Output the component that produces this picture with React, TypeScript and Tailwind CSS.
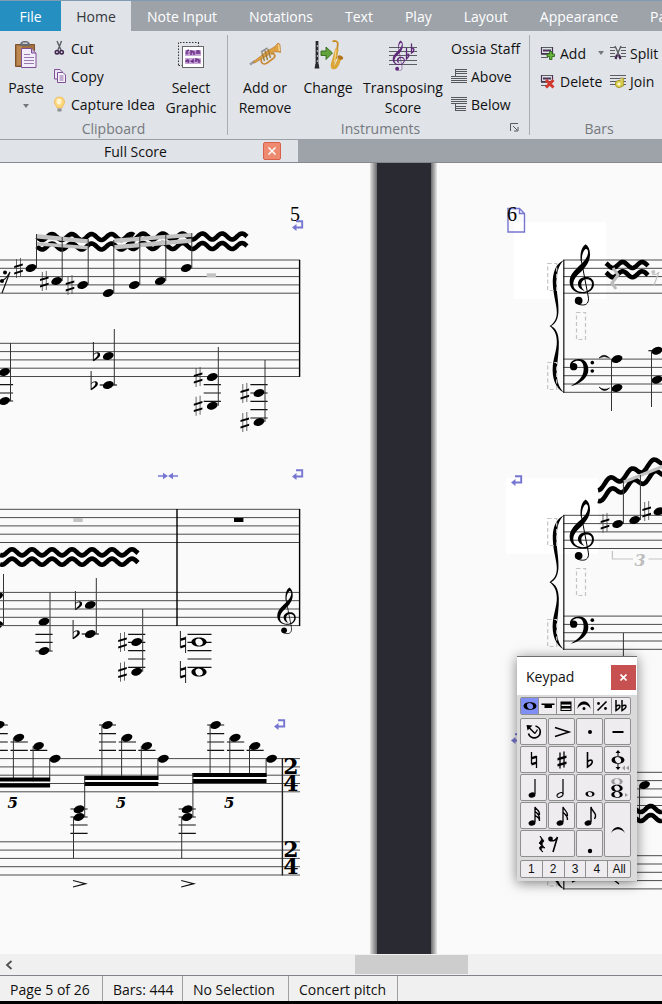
import React from 'react';

type Point = [number, number];

const TABS = ['Note Input', 'Notations', 'Text', 'Play', 'Layout', 'Appearance', 'Parts'];

/* ---------- notation glyphs ---------- */

const Head: React.FC<{ x: number; y: number }> = ({ x, y }) => (
  <ellipse rx="5.6" ry="3.7" transform={`translate(${x} ${y}) rotate(-20)`} />
);

const Sharp: React.FC<{ x: number; y: number }> = ({ x, y }) => (
  <g transform={`translate(${x} ${y})`}>
    <path d="M-2 -9V10M2 -10V9" stroke="#444" strokeWidth="0.8" />
    <path d="M-4.3 -2L4.3 -4.6V-2.6L-4.3 0ZM-4.3 4.4L4.3 1.8V3.8L-4.3 6.4Z" />
  </g>
);

const Flat: React.FC<{ x: number; y: number }> = ({ x, y }) => (
  <g transform={`translate(${x} ${y})`}>
    <path d="M-2.7 -14V5" stroke="#222" strokeWidth="1" />
    <path d="M-2.7 -1.5C0 -5 4.6 -4.2 4 -0.8C3.5 1.8 0 3.6 -2.7 5.2V3.6C-0.5 2 1.4 0.6 1.6 -1.2C1.7 -3.4 -1 -3 -2.7 -0.6Z" />
  </g>
);

const Natural: React.FC<{ x: number; y: number }> = ({ x, y }) => (
  <g transform={`translate(${x} ${y})`}>
    <path d="M-2.6 -11V5.4M2.6 -5.4V11" stroke="#222" strokeWidth="1" />
    <path d="M-2.6 -3.4L2.6 -5V-2.6L-2.6 -1ZM-2.6 4L2.6 2.4V4.8L-2.6 6.4Z" />
  </g>
);

const Whole: React.FC<{ x: number; y: number }> = ({ x, y }) => (
  <g transform={`translate(${x} ${y})`}>
    <path
      fillRule="evenodd"
      d="M-7.6 0C-7.6 -2.7 -4.3 -4.5 0 -4.5S7.6 -2.7 7.6 0S4.3 4.5 0 4.5S-7.6 2.7 -7.6 0ZM-2.6 -2.8C-4.6 -1.6 -3.4 2.6 -0.6 3.6C2.4 4 4.4 2.4 3.6 -0.4C2.6 -3.2 -0.6 -4.4 -2.6 -2.8Z"
    />
  </g>
);

const TrebleClef: React.FC<{ x: number; y: number; size?: number; color?: string }> = ({ x, y, size = 1, color = '#000' }) => (
  <g transform={`translate(${x} ${y}) scale(${size / 3})`} fill={color}>
    <path d="M49 0C59 6 63 20 62 34C60 56 48 70 32 85C18 98 12 108 12 120C12 134 24 143 40 143C58 143 68 132 68 119C68 110 61 105 52 105C41 105 36 113 36 121C36 129 40 135 46 139C34 137 26 128 26 118C26 106 37 98 51 98C65 98 74 106 74 119C74 135 60 147 39 147C18 147 1 133 1 112C1 95 10 84 24 70C38 57 54 44 56 26C57 16 52 12 48 15C40 22 37 36 38 48L34 50C32 28 36 8 49 0Z" />
    <path d="M36 48L57 158C60 174 52 183 39 182C30 182 20 178 19 169" fill="none" stroke={color} strokeWidth="3" />
    <circle cx="28" cy="169" r="11.5" />
  </g>
);

const BassClef: React.FC<{ x: number; y: number }> = ({ x, y }) => (
  <g transform={`translate(${x} ${y}) scale(0.333)`}>
    <circle cx="11" cy="23" r="11" />
    <path d="M0 22C-1 9 11 0 27 0C45 0 55 14 55 32C55 56 32 74 2 82C24 69 41 54 41 31C41 15 36 5 24 5C12 5 5 12 4 22Z" />
    <circle cx="67" cy="11" r="5.5" />
    <circle cx="67" cy="36" r="5.5" />
  </g>
);

// Spans from the top of the first staff to the foot of the second
const Brace: React.FC<{ x: number; top: number; bottom: number }> = ({ x, top, bottom }) => (
  <path
    transform={`translate(${x} ${top}) scale(0.333 ${(bottom - top) / 397})`}
    d="M44 0C20 9 8 37 10 73C12 110 22 135 22 157C22 179 12 190 0 198C12 206 22 220 22 245C22 267 14 287 10 315C6 355 20 387 44 397C28 383 20 360 22 325C24 300 29 270 28 245C27 217 18 205 5 198C18 191 27 177 27 150C27 120 22 105 21 70C21 37 28 13 44 0Z"
  />
);

const Staff: React.FC<{ x1: number; x2: number; y: number }> = ({ x1, x2, y }) => (
  <path
    d={[0, 1, 2, 3, 4].map((i) => `M${x1} ${y + i * 8.3}H${x2}`).join('')}
    stroke="#4a4a4a"
    strokeWidth="1"
  />
);

interface WaveProps {
  x1: number;
  x2: number;
  peak: number;
  y: number;
  period?: number;
  slope?: number;
  amp?: number;
}

const Wave: React.FC<WaveProps> = ({ x1, x2, peak, y, period = 19.8, slope = 0, amp = 3 }) => {
  const points: string[] = [];
  for (let x = x1; x <= x2; x += 1) {
    const offset = -amp * Math.cos(((x - peak) / period) * 2 * Math.PI);
    points.push(`${x},${(y + offset + (x - x1) * slope).toFixed(2)}`);
  }
  return <polyline points={points.join(' ')} fill="none" stroke="#000" strokeWidth="4.6" />;
};

const Ledgers: React.FC<{ x: number; ys: number[] }> = ({ x, ys }) => (
  <path d={ys.map((y) => `M${x - 8.6} ${y}H${x + 8.6}`).join('')} stroke="#111" strokeWidth="1.2" />
);

const Stem: React.FC<{ x: number; y1: number; y2: number }> = ({ x, y1, y2 }) => (
  <path d={`M${x} ${y1}V${y2}`} stroke="#333" strokeWidth="1" />
);

const BreakMark: React.FC<{ x: number; y: number }> = ({ x, y }) => (
  <g transform={`translate(${x} ${y})`}>
    <path d="M4 1.2H10.2V7.5H3" fill="none" stroke="#7676d2" strokeWidth="1.9" />
    <path d="M0 7.5L4.5 4V11Z" fill="#7676d2" />
  </g>
);

const DashedBox: React.FC<{ x: number; y: number }> = ({ x, y }) => (
  <rect x={x} y={y} width="9" height="27" fill="none" stroke="#c4c4c4" strokeWidth="1.2" strokeDasharray="4 2.5" />
);

/* ---------- pages ---------- */

const BEAMED: Point[] = [
  [31, 268], [56.7, 281], [82.7, 285], [108.3, 293], [134.3, 285], [160.3, 281], [186.3, 268],
];
const BEAM_TOPS = [234, 237, 239, 240, 237, 235, 233];

interface Chord {
  x: number;
  notes: number[];
  top: number;
  ledgers: number[];
  sharps?: boolean;
  flats?: boolean;
}

const CHORDS: Chord[] = [
  { x: 4.5, notes: [372, 401], top: 343, ledgers: [384.7, 393, 401] },
  { x: 108.3, notes: [356, 385], top: 329, ledgers: [385], flats: true },
  { x: 212.3, notes: [377, 405.7], top: 347, ledgers: [384.7, 393, 401.3], sharps: true },
  { x: 259, notes: [393, 422], top: 360, ledgers: [384.7, 393, 401.3, 409.7, 418], sharps: true },
  { x: -2.5, notes: [596, 625], top: 574, ledgers: [] },
  { x: 44, notes: [621.7, 651], top: 592, ledgers: [634.3, 642.3, 651] },
  { x: 90.3, notes: [605, 634], top: 578, ledgers: [634], flats: true },
  { x: 136.7, notes: [642, 671.7], top: 609, ledgers: [634.3, 642.3, 650.7, 659, 667.3], sharps: true },
];

const RUNS = [
  { dx: -108.2, beam: 777.4 },
  { dx: 0, beam: 776 },
  { dx: 108.2, beam: 773 },
];

const RUN_NOTES: Point[] = [
  [107.3, 725], [127, 737.7], [146.7, 746], [163.3, 758.7],
];

const LeftPage: React.FC = () => (
  <svg viewBox="0 163 370 791" preserveAspectRatio="xMaxYMin meet" className="block h-[791px] w-full" role="img" aria-label="Page 5">
    <text x="290" y="221" fontSize="20" fontFamily="Liberation Serif, serif">5</text>
    <BreakMark x={292} y={220} />

    <Wave x1={37} x2={134} peak={52} y={237} />
    <Wave x1={37} x2={134} peak={52} y={246.5} />
    <Wave x1={126} x2={247} peak={143} y={236.5} />
    <Wave x1={126} x2={247} peak={143} y={246} />
    <g fill="#c3c3c3">
      <path d="M36.5 234L88.3 239.3V243.6L36.5 238.5ZM36.5 242L88.3 246V249.5L36.5 245.5Z" />
      <path d="M114.3 238.5L191.7 233V237L114.3 242.8ZM114.3 245L191.7 238.5V242.8L114.3 249.5Z" />
    </g>

    <Staff x1={0} x2={300} y={260} />
    <Staff x1={0} x2={300} y={343.3} />
    <path d="M299.6 260V376.8" stroke="#000" strokeWidth="1.4" />
    <path d="M-2 281Q4 283 10 272L2 293" fill="none" stroke="#111" strokeWidth="1.2" />
    <circle cx="5" cy="272.5" r="2" />
    <circle cx="2" cy="281" r="2" />
    {BEAMED.map(([x, y], i) => (
      <g key={x}>
        <Head x={x} y={y} />
        <Stem x={x + 5.5} y1={BEAM_TOPS[i]} y2={y} />
      </g>
    ))}
    <Sharp x={18.5} y={268} />
    <Sharp x={44.3} y={281} />
    <Sharp x={70} y={285} />
    <rect x="206.7" y="273.3" width="9.3" height="4" fill="#c3c3c3" />

    {CHORDS.map(({ x, notes, top, ledgers, sharps, flats }) => (
      <g key={`${x}-${top}`}>
        <Ledgers x={x} ys={ledgers} />
        {notes.map((y) => (
          <g key={y}>
            <Head x={x} y={y} />
            {sharps && <Sharp x={x - 14.2} y={y} />}
          </g>
        ))}
        {flats && <Flat x={x - 12.2} y={notes[0]} />}
        {flats && <Flat x={x - 14.5} y={notes[1]} />}
        <Stem x={x + 6} y1={top} y2={notes[1]} />
      </g>
    ))}

    <path d="M158 476H166M170 476H178" stroke="#7676d2" strokeWidth="1.4" />
    <path d="M163 472.7L168 476L163 479.3ZM173 472.7L168 476L173 479.3Z" fill="#7676d2" />
    <BreakMark x={292} y={469} />
    <Staff x1={0} x2={300} y={509.3} />
    <Staff x1={0} x2={300} y={592.4} />
    <path d="M177 509V626M299.6 509V626" stroke="#000" strokeWidth="1.4" />
    <rect x="73.3" y="518" width="9.4" height="4" fill="#c3c3c3" />
    <rect x="234" y="518" width="9.4" height="4" />
    <Wave x1={0} x2={138} peak={12} period={20} y={552.3} />
    <Wave x1={0} x2={138} peak={12} period={20} y={561.7} />
    <TrebleClef x={277} y={587.5} size={0.76} />
    <path
      d="M187.5 634.3H211.500M187.5 642.3H211.500M187.5 650.7H211.500M187.5 659H211.500M187.5 667.3H211.500"
      stroke="#111"
      strokeWidth="1.2"
    />
    <ellipse cx="199" cy="642" rx="5" ry="3.5" fill="#fafafa" />
    <ellipse cx="199" cy="672" rx="5" ry="3.5" fill="#fafafa" />
    <Whole x={199} y={642} />
    <Whole x={199} y={672} />
    <Natural x={183} y={642} />
    <Natural x={183} y={672} />

    <BreakMark x={274} y={719} />
    <Staff x1={0} x2={300} y={758.6} />
    <Staff x1={0} x2={300} y={841.8} />
    <path d="M282.4 758V875.4" stroke="#222" strokeWidth="1.4" />
    {RUNS.map(({ dx, beam }) => (
      <g key={dx} transform={`translate(${dx} 0)`}>
        <path
          d="M99 725H116M99 733.7H116M99 742H116M99 750.3H116M118.7 742H136M118.7 750.3H136M138.3 750.3H155.5"
          stroke="#111"
          strokeWidth="1.2"
        />
        {RUN_NOTES.map(([x, y]) => (
          <g key={x}>
            <Head x={x} y={y} />
            <Stem x={x - 5.4} y1={y} y2={beam + 4} />
          </g>
        ))}
        <path d={`M84.3 ${beam}H158.3V${beam + 4}H84.3ZM84.3 ${beam + 6}H158.3V${beam + 10}H84.3Z`} />
        <Ledgers x={79} ys={[809, 817, 825, 833.3]} />
        <Head x={79} y={809.3} />
        <Head x={79} y={817} />
        <Stem x={84.7} y1={beam} y2={817} />
        <Stem x={73.5} y1={817} y2={858.3} />
        <path d="M73 880.5L85.5 883.7L73 887" fill="none" stroke="#111" strokeWidth="1.2" />
        <text x="121" y="808" textAnchor="middle" fontSize="15" fontWeight="bold" fontStyle="italic" fontFamily="DejaVu Serif, serif">5</text>
      </g>
    ))}
    <g fontSize="22" fontWeight="bold" fontFamily="DejaVu Serif, serif" textAnchor="middle">
      <text x="291" y="774">2</text>
      <text x="291" y="791">4</text>
      <text x="291" y="857">2</text>
      <text x="291" y="874">4</text>
    </g>
  </svg>
);

const RightPage: React.FC = () => (
  <svg viewBox="437 163 225 791" preserveAspectRatio="xMaxYMin meet" className="block h-[791px] w-full" role="img" aria-label="Page 6">
    <rect x="514" y="222" width="92" height="77" fill="#fff" />
    <rect x="506" y="478" width="92" height="76" fill="#fff" />
    <path d="M508 208.5H519.5L524.5 213.5V232H508ZM519.5 208.5V213.5H524.5" fill="none" stroke="#7676d2" strokeWidth="1.4" />
    <text x="507" y="221" fontSize="20" fontFamily="Liberation Serif, serif">6</text>

    <Staff x1={563} x2={662} y={260} />
    <Staff x1={563} x2={662} y={359.1} />
    <path d="M563.8 260V392.8" stroke="#222" strokeWidth="1.3" />
    <Brace x={549.5} top={260} bottom={392.5} />
    <TrebleClef x={569.3} y={244.3} />
    <BassClef x={570} y={359} />
    <Wave x1={606} x2={648} peak={622.7} period={19.5} y={265} />
    <Wave x1={606} x2={648} peak={622.7} period={19.5} y={274.3} />
    <path d="M613 268L618 275L612 283L616 289" fill="none" stroke="#bbb" strokeWidth="3" />
    <path d="M652 274Q656 276 659 272L654 285" fill="none" stroke="#c3c3c3" strokeWidth="1.2" />
    <circle cx="653.3" cy="272" r="2" fill="#c3c3c3" />
    <DashedBox x={547.7} y={263.5} />
    <DashedBox x={576.5} y={312.5} />
    <DashedBox x={547.7} y={362.5} />
    <path d="M599 358Q604 352.5 609.5 358Q604 355 599 358ZM599 387Q604 393.5 609.5 388Q604 391 599 387Z" stroke="#000" strokeWidth="0.6" />
    <Head x={617} y={359} />
    <Head x={617} y={388} />
    <Stem x={611.5} y1={359} y2={411} />
    <Ledgers x={657} ys={[350.7]} />
    <Head x={657} y={350.7} />
    <Head x={657} y={379.7} />
    <Stem x={651.5} y1={351} y2={407} />

    <BreakMark x={511} y={475} />
    <Staff x1={563} x2={662} y={515.3} />
    <Staff x1={563} x2={662} y={616.1} />
    <path d="M563.8 515V650" stroke="#222" strokeWidth="1.3" />
    <Brace x={549.5} top={515.3} bottom={649.5} />
    <TrebleClef x={569.3} y={499.5} />
    <BassClef x={570} y={616.5} />
    <DashedBox x={547.7} y={518.5} />
    <DashedBox x={576.5} y={568.5} />
    <DashedBox x={547.7} y={619.5} />
    <Wave x1={598} x2={663} peak={610} period={21.6} y={486.5} slope={-0.41} amp={4} />
    <Wave x1={598} x2={663} peak={611.5} period={21.6} y={498} slope={-0.4} amp={4} />
    <path d="M623.3 480.5L662 465V468.5L623.3 484Z" fill="#c3c3c3" />
    <Head x={617.7} y={524} />
    <Head x={634.7} y={520} />
    <Head x={659} y={511.3} />
    <Stem x={623.4} y1={481} y2={524} />
    <Stem x={640.4} y1={475} y2={520} />
    <Sharp x={605} y={523} />
    <Sharp x={646.7} y={511} />
    <path d="M612.4 551V559H633M648.5 559H662" fill="none" stroke="#c3c3c3" strokeWidth="1.2" />
    <text x="640" y="566" textAnchor="middle" fontSize="16" fontWeight="bold" fontStyle="italic" fontFamily="DejaVu Serif, serif" fill="#bdbdbd">3</text>
    <Stem x={623.4} y1={633} y2={660} />

    <BreakMark x={511} y={733} />
    <Staff x1={563} x2={662} y={772.3} />
    <Staff x1={563} x2={662} y={855.7} />
    <path d="M563.8 772V889.4" stroke="#222" strokeWidth="1.3" />
    <Brace x={549.5} top={772.3} bottom={889} />
    <DashedBox x={547.7} y={859} />
    <Head x={644.5} y={785} />
    <Stem x={639.5} y1={785} y2={819} />
    <Wave x1={636} x2={662} peak={650.7} period={20} y={809} />
    <Wave x1={636} x2={662} peak={650.7} period={20} y={818} />
    <path d="M572 882L576 880M614 880L619 884" stroke="#000" strokeWidth="1.4" />
  </svg>
);

/* ---------- ribbon icons ---------- */

const PasteIcon = () => (
  <svg width="26" height="30" viewBox="0 0 26 30" aria-hidden="true">
    <path d="M2.5 4.5H21.5V26.5H2.5Z" fill="#a4703f" stroke="#7b5230" />
    <path d="M4 6H9V25H4Z" fill="#bb8850" />
    <path d="M7 6C7 2 9 1 12 1S17 2 17 6Z" fill="#666a70" />
    <rect x="9.5" y="2.5" width="5" height="1.5" fill="#c9ccd0" />
    <path d="M8.5 8.5H18.5L23 13V27.5H8.5Z" fill="#f2edfa" stroke="#7c4f96" />
    <path d="M18.5 8.5V13H23" fill="#c6b0d6" stroke="#7c4f96" />
    <path d="M11 14.5H17M11 17.5H21M11 20.5H21M11 23.5H21" stroke="#9a78b0" />
  </svg>
);

const CutIcon = () => (
  <svg width="14" height="16" viewBox="0 0 14 16" aria-hidden="true">
    <path d="M4 1L8 10M8.5 1L5 10" stroke="#5a5d63" strokeWidth="1.4" />
    <circle cx="4" cy="12.2" r="1.7" fill="none" stroke="#43264f" strokeWidth="1.6" />
    <circle cx="8.6" cy="12.2" r="1.7" fill="none" stroke="#43264f" strokeWidth="1.6" />
  </svg>
);

const CopyIcon = () => (
  <svg width="14" height="16" viewBox="0 0 14 16" aria-hidden="true">
    <path d="M1.5 1.5H7L9.5 4V11H1.5Z" fill="#ece6f3" stroke="#7c4f96" />
    <path d="M4.5 4.5H10L12.5 7V14.5H4.5Z" fill="#f6f2fa" stroke="#7c4f96" />
    <path d="M6.5 8H10.5M6.5 10H10.5M6.5 12H10.5" stroke="#8d68a4" />
  </svg>
);

const BulbIcon = () => (
  <svg width="14" height="17" viewBox="0 0 14 17" aria-hidden="true">
    <path d="M6.500 1C3 1 1.500 3.500 1.500 6C1.500 8.500 3.500 9.500 4 12H9C9.500 9.500 11.500 8.500 11.500 6C11.500 3.500 10 1 6.500 1Z" fill="#fcd67a" stroke="#efb85a" strokeWidth="0.8" />
    <ellipse cx="6" cy="5.5" rx="2.5" ry="3" fill="#fff4cf" />
    <path d="M4.5 12.5H8.5V15.5H4.500Z" fill="#8b8f94" />
  </svg>
);

const SelectIcon = () => (
  <svg width="28" height="30" viewBox="0 0 28 30" aria-hidden="true">
    <path d="M1.5 25V2.5H22" fill="none" stroke="#333" strokeDasharray="1.5 1.5" />
    <path d="M21.5 2.5V6M1.5 25.5H5" stroke="#333" strokeDasharray="1.5 1.5" />
    <rect x="5.5" y="6.5" width="21" height="21" fill="#fff" stroke="#666" />
    <path d="M8 10H24V16H8ZM8 18H24V24H8Z" fill="#c7a6d8" />
    <path d="M8 13H24M8 21H24" stroke="#9a62b4" />
    <path d="M10 14.5V11L12 10M14 15V11L17 12V15M20 14V11H22V14M9 22C11 18 12 20 11 23M14 22L16 20V23M19 22V19L22 20V23" fill="none" stroke="#6c2f86" strokeWidth="1.4" />
  </svg>
);

const TrumpetIcon = () => (
  <svg width="34" height="30" viewBox="0 0 34 30" aria-hidden="true">
    <path d="M2 24.5L7 21" stroke="#9a9da2" strokeWidth="2.4" />
    <path d="M5 22L20 10.5C25 8 28 6 30 3L32 4.500L32.500 12.500C28 11 25 12 21 14.500L6.500 23Z" fill="#e0a143" stroke="#a86c23" strokeWidth="0.6" />
    <path d="M13 19C13 24 16 25 19 23L26 18C28 15 26 13 23 14" fill="none" stroke="#c98a35" strokeWidth="1.7" />
    <path d="M14 12.500L16.500 21M17 10.500L19.500 20M20 9L22.500 18" stroke="#a3803f" strokeWidth="1.5" />
    <path d="M13 12L19.500 8" stroke="#8d9095" strokeWidth="1.5" />
    <path d="M30.500 4.500L31.500 11" stroke="#f6d693" strokeWidth="1.4" />
  </svg>
);

const ChangeIcon = () => (
  <svg width="32" height="32" viewBox="0 0 32 32" aria-hidden="true">
    <path d="M5 2V27" stroke="#26282c" strokeWidth="2.8" />
    <path d="M2.5 29.500L3.500 25H6.500L7.500 29.500Z" fill="#26282c" />
    <path d="M5.500 6V8M5.500 11V13M5.500 16V18M5.500 21V23" stroke="#a4a7ac" strokeWidth="1.4" />
    <path d="M9 12H14V8L20.5 14L14 20.5V16.5H9Z" fill="#62a33c" stroke="#33661c" strokeWidth="0.9" />
    <path d="M20.500 2.500C23 1.500 26 2 25.800 5L24 20" fill="none" stroke="#c88c28" strokeWidth="1.8" />
    <path d="M25 10L22 21C20 26 20 28.500 22 28.500C25 28.500 25.500 24 28 19" fill="none" stroke="#dba637" strokeWidth="3.6" />
    <ellipse cx="28.300" cy="18.500" rx="3" ry="2" fill="#b2761e" transform="rotate(25 28.300 18.500)" />
    <path d="M24 11L22.500 23" stroke="#f7dc93" strokeWidth="1" />
  </svg>
);

const TransposeIcon = () => (
  <svg width="30" height="32" viewBox="0 0 30 32" aria-hidden="true">
    <path d="M1 8.5H29M1 12.5H29M1 16.5H29M1 21.5H29M1 25.5H29" stroke="#5b5d62" />
    <TrebleClef x={4.5} y={1.5} size={0.5} color="#5f2779" />
    <g fill="none" stroke="#5f2779" strokeWidth="1.3">
      <path d="M18.5 9V20C22 17 21.5 14 18.5 15.500M23.5 4.500V14C27 11.500 26.500 8.500 23.5 10" />
    </g>
  </svg>
);

const OssiaIcon: React.FC<{ above?: boolean }> = ({ above }) => (
  <svg width="16" height="16" viewBox="0 0 16 16" aria-hidden="true">
    {above ? (
      <path d="M5 1.5H16M5 3.5H16M5 5.5H16M0 8.5H16M0 10.5H16M0 12.5H16M0 14.5H16M4.5 1V8" stroke="#55585d" />
    ) : (
      <path d="M0 1.5H16M0 3.5H16M0 5.5H16M0 7.5H16M5 10.5H15M5 12.5H15M5 14.5H15M4.5 8V15" stroke="#55585d" />
    )}
  </svg>
);

const BarIcon: React.FC<{ kind: 'add' | 'delete' | 'split' | 'join' }> = ({ kind }) => (
  <svg width="16" height="16" viewBox="0 0 16 16" aria-hidden="true">
    {kind === 'split' || kind === 'join' ? (
      <path d="M0 2.5H16M0 5.5H16M0 8.5H16M0 11.5H16" stroke="#5b5d62" strokeWidth="1.2" />
    ) : (
      <>
        <path d="M1 2.5H13M1 9.5H13M1 12.5H8" stroke="#5b5d62" />
        <path d="M1.5 2V8.500H12.5V2" fill="none" stroke="#4a3357" strokeWidth="1.2" />
        <path d="M3 5.500H11" stroke="#4a3357" strokeWidth="2" />
      </>
    )}
    {kind === 'add' && <path d="M7 9H9.5V6.500H12V9H14.500V11.500H12V14.500H9.5V11.500H7Z" fill="#69b53c" stroke="#2f6b1b" strokeWidth="0.9" />}
    {kind === 'delete' && <path d="M6 7L13.500 14.5M13.500 7L6 14.5" stroke="#d3382d" strokeWidth="3" />}
    {kind === 'split' && (
      <>
        <path d="M5 0H11V16H5Z" fill="#e0e3e8" />
        <path d="M5 1L9.5 11M11 1L6.5 11" stroke="#5a5d63" strokeWidth="1.4" />
        <path d="M5.500 14L7 10M10.500 14L9 10" stroke="#43264f" strokeWidth="2.2" />
      </>
    )}
    {kind === 'join' && (
      <>
        <circle cx="9" cy="11" r="3.6" fill="#e3d65a" stroke="#a2962b" />
        <circle cx="9" cy="11" r="1.300" fill="#fffbe0" />
        <path d="M10.500 5H13.500V13H11" fill="#d8cb52" stroke="#a2962b" strokeWidth="0.8" />
      </>
    )}
  </svg>
);

const DropArrow = () => (
  <svg width="6" height="4" viewBox="0 0 6 4" aria-hidden="true">
    <path d="M0 0H6L3 4Z" fill="#75787d" />
  </svg>
);

/* ---------- ribbon ---------- */

const Group: React.FC<{ label: string; className?: string; children: React.ReactNode }> = ({ label, className = '', children }) => (
  <section aria-label={label} className={`flex shrink-0 flex-col ${className}`}>
    <div className="flex h-[88px]">{children}</div>
    <div className="text-center leading-5 text-[#75787d]">{label}</div>
  </section>
);

const BigButton: React.FC<{ icon: React.ReactNode; className: string; children: React.ReactNode }> = ({ icon, className, children }) => (
  <button className={`flex flex-col items-center pt-2 leading-5 ${className}`}>
    <span className="flex h-8 items-center justify-center">{icon}</span>
    <span className="pt-[7px]">{children}</span>
  </button>
);

const SmallButton: React.FC<{ icon: React.ReactNode; children: React.ReactNode }> = ({ icon, children }) => (
  <button className="flex h-7 items-center gap-1 whitespace-nowrap">
    {icon}
    {children}
  </button>
);

const Ribbon: React.FC = () => (
  <header className="overflow-hidden whitespace-nowrap">
    <nav className="flex h-[31px] border-t border-[#7f9db1] bg-[#9ea3aa] text-white">
      <button className="w-[61px] shrink-0 bg-[#258fc2] pt-px">File</button>
      <button className="w-[70px] shrink-0 bg-[#e0e3e8] text-[#33363b]">Home</button>
      <div className="flex gap-8 pl-4">
        {TABS.map((tab) => (
          <button key={tab} className="shrink-0">{tab}</button>
        ))}
      </div>
    </nav>
    <div className="flex h-[109px] border-b border-[#9b9fa6] bg-[#e0e3e8]">
      <Group label="Clipboard" className="w-[227px]">
        <BigButton icon={<PasteIcon />} className="w-[52px]">
          Paste
          <span className="flex h-4 items-center justify-center"><DropArrow /></span>
        </BigButton>
        <div className="flex w-[110px] flex-col pt-[3px] pl-px">
          <SmallButton icon={<CutIcon />}>Cut</SmallButton>
          <SmallButton icon={<CopyIcon />}>Copy</SmallButton>
          <SmallButton icon={<BulbIcon />}>Capture Idea</SmallButton>
        </div>
        <BigButton icon={<SelectIcon />} className="w-[58px]">Select<br />Graphic</BigButton>
      </Group>
      <div className="my-1 w-px shrink-0 bg-[#a9adb3]" />
      <Group label="Instruments" className="relative w-[301px] pl-1">
        <BigButton icon={<TrumpetIcon />} className="w-[66px]">Add or<br />Remove</BigButton>
        <BigButton icon={<ChangeIcon />} className="w-[60px]">Change</BigButton>
        <BigButton icon={<TransposeIcon />} className="w-[90px]">Transposing<br />Score</BigButton>
        <div className="flex flex-col pt-[3px] pl-[3px]">
          <div className="flex h-7 items-center">Ossia Staff</div>
          <SmallButton icon={<OssiaIcon above />}>Above</SmallButton>
          <SmallButton icon={<OssiaIcon />}>Below</SmallButton>
        </div>
        <button aria-label="Instrument options" className="absolute right-[10px] bottom-[7px]">
          <svg width="9" height="9" viewBox="0 0 9 9" aria-hidden="true">
            <path d="M.5 8V.5H8M3 3L7 7M8 4V8H4" fill="none" stroke="#55585d" />
          </svg>
        </button>
      </Group>
      <div className="my-1 w-px shrink-0 bg-[#a9adb3]" />
      <Group label="Bars" className="w-[138px]">
        <div className="flex w-[80px] flex-col pt-2 pl-[10px]">
          <div className="flex items-center justify-between">
            <SmallButton icon={<BarIcon kind="add" />}>Add</SmallButton>
            <button aria-label="Add options" className="pr-[6px]"><DropArrow /></button>
          </div>
          <SmallButton icon={<BarIcon kind="delete" />}>Delete</SmallButton>
        </div>
        <div className="flex flex-col pt-2">
          <SmallButton icon={<BarIcon kind="split" />}>Split</SmallButton>
          <SmallButton icon={<BarIcon kind="join" />}>Join</SmallButton>
        </div>
      </Group>
    </div>
  </header>
);

/* ---------- keypad ---------- */

const PadKey: React.FC<{ label: string; className?: string; children: React.ReactNode }> = ({ label, className = '', children }) => (
  <button aria-label={label} className={`flex items-center justify-center rounded-[2px] border border-[#8f8f8f] bg-[#eeecee] ${className}`}>
    <svg width="24" height="24" viewBox="-12 -12 24 24" aria-hidden="true">{children}</svg>
  </button>
);

const LAYOUTS = [
  { label: 'Common notes', icon: <g transform="scale(0.85)"><Whole x={0} y={0} /></g> },
  { label: 'More notes', icon: <path d="M-6.5 -2.500H6.500V-1H4V2H-3.500V-1H-6.500Z" /> },
  { label: 'Beams', icon: <path d="M-5 -4.500H5V-1.5H-5ZM-5 0H5V2.500H-5ZM-5.5 -4.500H-4.5V5H-5.5ZM4.5 -4.500H5.5V5H4.5ZM-5 4H5V5H-5Z" /> },
  { label: 'Articulations', icon: <path d="M-6.500 3C-6.500 -7 6.500 -7 6.500 3C4.500 -3 -4.500 -3 -6.500 3ZM-1.500 2.500A1.500 1.500 0 1 0 1.500 2.500A1.500 1.500 0 1 0 -1.500 2.500" /> },
  { label: 'Jazz articulations', icon: <g><path d="M-4.500 4.500L4.500 -4.500" stroke="#000" strokeWidth="1.600" /><circle cx="-3.500" cy="-2.500" r="1.400" /><circle cx="3.500" cy="2.500" r="1.400" /></g> },
  {
    label: 'Accidentals',
    icon: (
      <path
        d="M-5 -6V4.500C1 1 -.5 -2.500 -5 .5M1 -6V4.500C7 1 5.500 -2.500 1 .5"
        fill="none"
        stroke="#000"
        strokeWidth="1.5"
      />
    ),
  },
];

const SmallHead = () => <ellipse cx="-2" cy="7" rx="3.500" ry="2.6" transform="rotate(-18 -2 7)" />;

const Keypad: React.FC = () => (
  <aside aria-label="Keypad" className="absolute top-[493px] right-[25px] w-[120px] border-t border-[#6f6f6f] bg-[#dadada] shadow-[0_2px_12px_rgba(0,0,0,0.5)]">
    <div className="flex h-[38px] items-center justify-between bg-white pr-px pl-[9px]">
      <h2>Keypad</h2>
      <button aria-label="Close keypad" className="mt-2 flex h-[25px] w-[25px] items-center justify-center self-start bg-[#c75050]">
        <svg width="7" height="7" viewBox="0 0 7 7" aria-hidden="true">
          <path d="M.5 .5L6.5 6.5M6.5 .5L.5 6.5" stroke="#fff" strokeWidth="1.6" />
        </svg>
      </button>
    </div>
    <div className="flex flex-col gap-[3px] pt-[2px] pr-[6px] pb-[3px] pl-[3px]">
      <div className="grid h-[18px] grid-cols-6 divide-x divide-[#8f8f8f] rounded-[2px] border border-[#8f8f8f] bg-[#eeecee]">
        {LAYOUTS.map(({ label, icon }, i) => (
          <button key={label} aria-label={label} className={`flex items-center justify-center ${i === 0 ? 'bg-[#7f8ff5]' : ''}`}>
            <svg width="16" height="14" viewBox="-8 -7 16 14" aria-hidden="true">{icon}</svg>
          </button>
        ))}
      </div>
      <div className="grid auto-rows-[27px] grid-cols-4 gap-px">
        <PadKey label="Return">
          <path d="M1.500 -6A6 6 0 1 1 -5.500 1.500" fill="none" stroke="#000" strokeWidth="1.7" />
          <path d="M1 1.500L-5 -4.500" stroke="#000" strokeWidth="1.5" />
          <path d="M-7.500 -7L-1.500 -6.500L-6.500 -1.500Z" />
          <path d="M1 1.500L3.500 -2.500" stroke="#000" strokeWidth="1.2" />
        </PadKey>
        <PadKey label="Accent">
          <path d="M-7 -4.5L7 0L-7 4.5" fill="none" stroke="#000" strokeWidth="1.5" />
        </PadKey>
        <PadKey label="Staccato"><circle r="2" /></PadKey>
        <PadKey label="Tenuto"><path d="M-5.5 -1H5.5V1H-5.5Z" /></PadKey>

        <PadKey label="Natural">
          <path d="M-2.500 -8V4M2.500 -4V8" stroke="#000" strokeWidth="1.3" />
          <path d="M-2.500 -3L2.500 -4.500V-2L-2.500 -.5ZM-2.500 3L2.500 1.500V4L-2.500 5.500Z" />
        </PadKey>
        <PadKey label="Sharp">
          <path d="M-2 -7.500V8.500M2 -8.500V7.500" stroke="#000" strokeWidth="1.3" />
          <path d="M-4.500 -2L4.500 -4.500V-2L-4.500 .5ZM-4.500 4L4.500 1.500V4L-4.500 6.500Z" />
        </PadKey>
        <PadKey label="Flat">
          <path d="M-2.500 -8V7C4.500 3 3 -2.500 -2.500 1.500" fill="none" stroke="#000" strokeWidth="1.6" />
        </PadKey>
        <PadKey label="Octave">
          <g transform="scale(0.85)"><Whole x={0} y={0} /></g>
          <path d="M0 -10L2.5 -7H-2.5ZM0 10L2.5 7H-2.5ZM-.5 -8H.5V-4H-.5ZM-.5 8H.5V4H-.5Z" />
          <path d="M7 5.500V10.500L4 8ZM11 5.500V10.500L8 8Z" fill="#9a9a9a" />
        </PadKey>

        <PadKey label="Quarter note"><SmallHead /><path d="M1 6V-9" stroke="#000" strokeWidth="1.2" /></PadKey>
        <PadKey label="Half note">
          <ellipse cx="-2" cy="7" rx="3.2" ry="2" transform="rotate(-25 -2 7)" fill="none" stroke="#000" />
          <path d="M1 6V-9" stroke="#000" strokeWidth="1.2" />
        </PadKey>
        <PadKey label="Whole note"><g transform="translate(0 6) scale(0.6)"><Whole x={0} y={0} /></g></PadKey>
        <PadKey label="Chord">
          <g transform="translate(-1 6.500) scale(0.75)"><Whole x={0} y={0} /><Whole x={0} y={-8.500} /></g>
          <g transform="translate(-1 -6.500) scale(0.75)" fill="#9a9a9a"><Whole x={0} y={0} /></g>
          <path d="M7 5V9L10 7Z" fill="#9a9a9a" />
        </PadKey>

        <PadKey label="32nd note">
          <SmallHead />
          <path d="M1 6V-9C2 -6 6 -6 5.5 -1M1 -5C2 -3 6 -2 5.5 3M1 -1C2 1 6 1 5.5 5" fill="none" stroke="#000" strokeWidth="1.3" />
        </PadKey>
        <PadKey label="16th note">
          <SmallHead />
          <path d="M1 6V-9C2 -6 6 -5 5.5 0M1 -4C2 -2 6 -1 5.5 4" fill="none" stroke="#000" strokeWidth="1.3" />
        </PadKey>
        <PadKey label="Eighth note">
          <SmallHead />
          <path d="M1 6V-9C2 -4 8 -3 4.5 3" fill="none" stroke="#000" strokeWidth="1.4" />
        </PadKey>
        <PadKey label="Tie" className="row-span-2"><path d="M-7 3C-4 -5 4 -5 7 3C3 -2 -3 -2 -7 3Z" /></PadKey>

        <PadKey label="Rest" className="col-span-2">
          <path d="M-8 -8L-4 -3C-7 0 -6 1 -3 4C-7 3 -8 5 -5 8C-10 5 -9 2 -6 2L-9 -1C-6 -4 -6 -5 -8 -8Z" stroke="#000" strokeWidth="0.8" />
          <circle cx="2.5" cy="-5" r="2.4" />
          <path d="M2 -4C5 -2 8 -4 9.5 -7L5 8" fill="none" stroke="#000" strokeWidth="1.6" />
        </PadKey>
        <PadKey label="Dot"><circle cy="7" r="2.2" /></PadKey>
      </div>
      <div className="grid h-[18px] grid-cols-5 divide-x divide-[#8f8f8f] rounded-[2px] border border-[#8f8f8f] bg-[#eeecee] font-['Liberation_Sans',sans-serif] text-[12px] leading-4">
        {['1', '2', '3', '4', 'All'].map((voice) => (
          <button key={voice}>{voice}</button>
        ))}
      </div>
    </div>
  </aside>
);

/* ---------- window ---------- */

const App: React.FC = () => (
  <div className="flex min-h-screen flex-col overflow-hidden bg-[#f0f0f0] font-['Open_Sans','Noto_Sans',sans-serif] text-[14px] text-[#111]">
    <Ribbon />

    <div className="flex h-[23px] border-b border-[#85888f] bg-[#9ea3aa]">
      <div className="flex w-[298px] items-center bg-[#e0e3e8] pr-[17px]">
        <span className="flex-1 pt-px pl-2 text-center leading-5">Full Score</span>
        <button aria-label="Close Full Score" className="flex h-[18px] w-[18px] items-center justify-center rounded-[2px] border border-[#d9614c] bg-[#ee8a70]">
          <svg width="8" height="8" viewBox="0 0 8 8" aria-hidden="true">
            <path d="M.5 .5L7.5 7.5M7.5 .5L.5 7.5" stroke="#fff" strokeWidth="1.5" />
          </svg>
        </button>
      </div>
    </div>

    <main className="relative flex flex-1 overflow-hidden bg-[#fafafa]">
      <div className="min-w-0 grow basis-[370px]"><LeftPage /></div>
      <div className="w-[7px] shrink-0 bg-linear-to-r from-[#e2e2e2] to-[#6d6d70]" />
      <div className="w-[54px] shrink-0 bg-[#2a2a32]" />
      <div className="w-[6px] shrink-0 bg-linear-to-r from-[#6d6d70] to-[#e8e8e8]" />
      <div className="min-w-0 grow basis-[225px]"><RightPage /></div>
      <Keypad />
    </main>

    <div className="flex h-[21px] items-center bg-[#f0f0f0]">
      <button aria-label="Scroll left" className="flex w-[17px] justify-center">
        <svg width="8" height="10" viewBox="0 0 8 10" aria-hidden="true">
          <path d="M6.5 1L2 5L6.5 9" fill="none" stroke="#505050" strokeWidth="1.8" />
        </svg>
      </button>
      <div className="flex h-full flex-1 py-px pl-[338px]">
        <div className="h-full w-[113px] bg-[#cdcdcd]" />
      </div>
    </div>

    <footer className="flex h-[29px] border-t border-b-[3px] border-t-[#80848a] border-b-black bg-[#f0f0f0] leading-[28px]">
      <span className="h-full w-[103px] border-r border-[#a0a0a0] pl-[10px]">Page 5 of 26</span>
      <span className="h-full w-[80px] border-r border-[#a0a0a0] pl-[10px]">Bars: 444</span>
      <span className="h-full w-[106px] border-r border-[#a0a0a0] pl-[10px]">No Selection</span>
      <span className="h-full w-[109px] border-r border-[#a0a0a0] pl-[10px]">Concert pitch</span>
    </footer>
  </div>
);

export default App;
